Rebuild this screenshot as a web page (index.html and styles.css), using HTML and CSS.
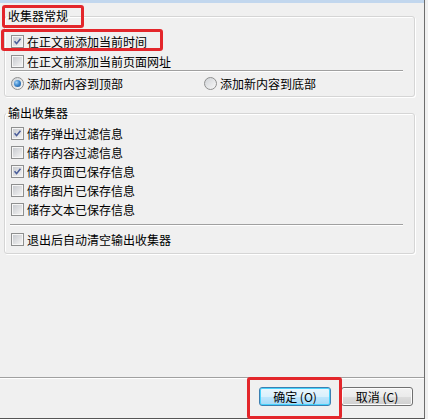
FILE: index.html
```html
<!DOCTYPE html>
<html>
<head>
<meta charset="utf-8">
<link rel="stylesheet" href="styles.css">
</head>
<body>
<div class="window">
  <div class="topbar"></div>
  <div class="main">
    <fieldset class="group g1">
      <legend>收集器常规</legend>
      <div class="body b1">
        <div class="row"><span class="cb on"><svg viewBox="0 0 13 13"><path d="M3 6.2 L5.4 9 L10 3.2"/></svg></span><span>在正文前添加当前时间</span></div>
        <div class="row r2"><span class="cb"></span><span>在正文前添加当前页面网址</span></div>
        <div class="sep"></div>
        <div class="row radios">
          <div class="opt"><span class="rb on"></span><span>添加新内容到顶部</span></div>
          <div class="opt"><span class="rb"></span><span>添加新内容到底部</span></div>
        </div>
      </div>
    </fieldset>
    <fieldset class="group g2">
      <legend>输出收集器</legend>
      <div class="body b2">
        <div class="list">
          <div class="row"><span class="cb on"><svg viewBox="0 0 13 13"><path d="M3 6.2 L5.4 9 L10 3.2"/></svg></span><span>储存弹出过滤信息</span></div>
          <div class="row"><span class="cb"></span><span>储存内容过滤信息</span></div>
          <div class="row"><span class="cb on"><svg viewBox="0 0 13 13"><path d="M3 6.2 L5.4 9 L10 3.2"/></svg></span><span>储存页面已保存信息</span></div>
          <div class="row"><span class="cb"></span><span>储存图片已保存信息</span></div>
          <div class="row"><span class="cb"></span><span>储存文本已保存信息</span></div>
        </div>
        <div class="sep s2"></div>
        <div class="row last"><span class="cb"></span><span>退出后自动清空输出收集器</span></div>
      </div>
    </fieldset>
  </div>
  <div class="spacer"></div>
  <div class="hsep"></div>
  <div class="footer">
    <button class="btn default">确定 (O)</button>
    <button class="btn">取消 (C)</button>
  </div>
  <div class="mark m1"></div>
  <div class="mark m2"></div>
  <div class="mark m3"></div>
</div>
</body>
</html>
```
FILE: styles.css
```css
html, body {
  margin: 0;
  padding: 0;
  background: #f0f0f0;
}
body {
  font-family: "Noto Sans CJK SC", "Liberation Sans", sans-serif;
  font-size: 12px;
  color: #000;
}
.window {
  position: relative;
  width: 424px;
  height: 418px;
  border-right: 1px solid #6d6d6d;
  border-bottom: 1px solid #555;
  display: flex;
  flex-direction: column;
  background: #f0f0f0;
}
.topbar {
  height: 3px;
  background: #c2d7ee;
}
.main {
  padding: 5px 9px 0 4px;
}
.group {
  margin: 0;
  padding: 0;
  min-width: 0;
  border: 1px solid #d5d5d5;
  border-radius: 3px;
  box-shadow: inset 1px 1px 0 #fff, 1px 1px 0 #fff;
}
.group legend {
  margin-left: 1px;
  padding: 0 2px;
  line-height: 16px;
  height: 16px;
}
.g2 {
  margin-top: 8px;
}
.body {
  padding-left: 6px;
  display: flex;
  flex-direction: column;
}
.b1 {
  padding-top: 8px;
  padding-bottom: 4px;
}
.b2 {
  padding-top: 3px;
  padding-bottom: 5px;
}
.row {
  height: 18px;
  display: flex;
  align-items: center;
  gap: 3px;
  white-space: nowrap;
}
.r2 {
  margin-top: 2px;
}
.list {
  display: flex;
  flex-direction: column;
  gap: 1px;
}
.sep {
  height: 1px;
  background: #a0a0a0;
  border-bottom: 1px solid #fff;
  margin: 0 11px 0 -1px;
}
.s2 {
  margin-top: 6px;
}
.radios {
  margin-top: 2px;
  display: grid;
  grid-template-columns: 190px 1fr;
}
.opt {
  display: flex;
  align-items: center;
  gap: 3px;
}
.last {
  margin-top: 4px;
}
.cb {
  box-sizing: border-box;
  width: 13px;
  height: 13px;
  flex: none;
  border: 1px solid #8e8f8f;
  background: linear-gradient(135deg, #c4c7cc 0%, #e0e1e3 55%, #f8f8f8 100%);
  box-shadow: inset 0 0 0 1px #f6f6f6;
  display: flex;
}
.cb svg {
  width: 11px;
  height: 11px;
}
.cb path {
  fill: none;
  stroke: #4a5d9a;
  stroke-width: 1.8;
}
.rb {
  box-sizing: border-box;
  width: 13px;
  height: 13px;
  flex: none;
  border-radius: 50%;
  border: 1px solid #8e8f8f;
  background: linear-gradient(135deg, #cfd2d6, #f8f8f8);
  position: relative;
}
.rb.on::after {
  content: "";
  position: absolute;
  left: 2px;
  top: 2px;
  width: 7px;
  height: 7px;
  border-radius: 50%;
  background: radial-gradient(circle at 35% 35%, #a6d3f6 0%, #3f8ad0 45%, #18508f 100%);
}
.spacer {
  flex: 1;
}
.hsep {
  height: 1px;
  background: #a0a0a0;
  border-bottom: 1px solid #fff;
}
.footer {
  height: 39px;
  box-sizing: border-box;
  padding: 8px 11px 0 0;
  display: flex;
  justify-content: flex-end;
  align-items: flex-start;
  gap: 10px;
}
.btn {
  width: 72px;
  height: 19px;
  padding: 0;
  margin: 0;
  font-family: inherit;
  font-size: 12px;
  line-height: 17px;
  color: #000;
  border: 1px solid #707070;
  border-radius: 3px;
  background: linear-gradient(to bottom, #f2f2f2 0%, #ebebeb 50%, #dddddd 51%, #cfcfcf 100%);
  box-shadow: inset 0 0 0 1px #fcfcfc;
}
.btn.default {
  border-color: #3c7fb1;
  background: linear-gradient(to bottom, #eaf6fd 0%, #d9f0fc 50%, #bee6fd 51%, #a7d9f5 100%);
  box-shadow: inset 0 0 0 1px #48d3fc;
}
.mark {
  position: absolute;
  border: 3px solid #e3262b;
  border-radius: 3px;
  box-sizing: border-box;
}
.m1 {
  left: 2px;
  top: 5px;
  width: 82px;
  height: 23px;
}
.m2 {
  left: 1px;
  top: 29px;
  width: 162px;
  height: 22px;
}
.m3 {
  left: 247px;
  top: 377px;
  width: 95px;
  height: 42px;
}
```
